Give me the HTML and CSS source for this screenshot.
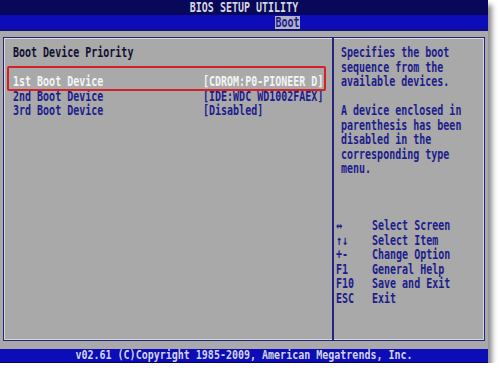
FILE: index.html
```html
<!DOCTYPE html>
<html lang="en">
<head>
    <meta charset="UTF-8">
    <meta name="viewport" content="width=device-width, initial-scale=1.0">
    <title>BIOS Setup Utility</title>
    <link rel="stylesheet" href="styles.css">
</head>
<body>
    <div class="screen">
        <header class="title-bar"><span class="txt">BIOS SETUP UTILITY</span></header>
        <nav class="tab-bar">
            <span class="tab"><span class="txt">Boot</span></span>
        </nav>

        <div class="body">
            <div class="panel">
                <section class="main">
                    <h1 class="line">Boot Device Priority</h1>
                    <ul class="devices">
                        <li class="line selected"><span class="label">1st Boot Device</span><span class="value">[CDROM:P0-PIONEER D]</span></li>
                        <li class="line"><span class="label">2nd Boot Device</span><span class="value">[IDE:WDC WD1002FAEX]</span></li>
                        <li class="line"><span class="label">3rd Boot Device</span><span class="value">[Disabled]</span></li>
                    </ul>
                    <div class="highlight"></div>
                </section>

                <aside class="help">
                    <p>
                        <span class="line">Specifies the boot</span>
                        <span class="line">sequence from the</span>
                        <span class="line">available devices.</span>
                    </p>
                    <p>
                        <span class="line">A device enclosed in</span>
                        <span class="line">parenthesis has been</span>
                        <span class="line">disabled in the</span>
                        <span class="line">corresponding type</span>
                        <span class="line">menu.</span>
                    </p>
                    <ul class="keys">
                        <li class="line"><span class="key">&harr;</span><span>Select Screen</span></li>
                        <li class="line"><span class="key">&uarr;&darr;</span><span>Select Item</span></li>
                        <li class="line"><span class="key">+-</span><span>Change Option</span></li>
                        <li class="line"><span class="key">F1</span><span>General Help</span></li>
                        <li class="line"><span class="key">F10</span><span>Save and Exit</span></li>
                        <li class="line"><span class="key">ESC</span><span>Exit</span></li>
                    </ul>
                </aside>
            </div>
        </div>

        <footer class="footer"><span class="txt">v02.61 (C)Copyright 1985-2009, American Megatrends, Inc.</span></footer>
    </div>
</body>
</html>
```

FILE: styles.css
```css
:root {
    --navy: #08085a;
    --blue: #0c0cb8;
    --gray: #a9a9a9;
    --ink: #1c1c8c;
    --line: #24247c;
    --light: #d8d8e2;
    --red: #d42027;
}

* {
    margin: 0;
    padding: 0;
    box-sizing: border-box;
}

body {
    background: #ffffff;
    font-family: "DejaVu Sans Mono", "Liberation Mono", monospace;
    font-size: 10px;
    font-weight: bold;
    color: var(--ink);
}

ul {
    list-style: none;
}

.screen {
    width: 488px;
    height: 363px;
    background: var(--gray);
    display: flex;
    flex-direction: column;
    box-shadow: 4px 5px 5px rgba(0,0,0,0.45);
}

/* tall, narrow BIOS glyphs */
.txt,
.line {
    display: block;
    transform: scaleY(1.35);
}

.title-bar {
    height: 15px;
    line-height: 15px;
    background: var(--navy);
    color: #d6d6de;
    text-align: center;
}

.tab-bar {
    height: 16px;
    background: var(--blue);
    border-bottom: 2px solid #12127a;
    padding: 1px 0 0 275px;
}

.tab {
    display: block;
    width: 25px;
    height: 13px;
    line-height: 13px;
    background: #b2b2c4;
    color: var(--ink);
    text-align: center;
}

.body {
    flex: 1;
    padding: 6px 3px 8px;
}

.panel {
    height: 100%;
    display: flex;
    border: 1px solid var(--line);
    box-shadow: inset 0 0 0 1px var(--light);
}

.line {
    height: 14.5px;
    line-height: 14.5px;
    white-space: pre;
}

.main {
    width: 330px;
    position: relative;
    padding: 8px 0 0 9px;
    border-right: 2px solid var(--line);
}

.main h1 {
    font-size: 10px;
    color: #101030;
    margin-bottom: 14.5px;
}

.devices li {
    display: flex;
}

.devices .label {
    width: 190px;
}

.devices .selected {
    color: #f4f4f4;
}

/* annotation box drawn over the first row */
.highlight {
    position: absolute;
    left: 3px;
    top: 28px;
    width: 319px;
    height: 25px;
    border: 2px solid var(--red);
    border-radius: 2px;
}

.help {
    flex: 1;
    padding: 8px 0 0 7px;
}

.help p + p {
    margin-top: 14.5px;
}

.keys {
    margin: 42.5px 0 0 -5px;
}

.keys li {
    display: flex;
}

.keys .key {
    width: 36px;
}

.footer {
    height: 14px;
    line-height: 14px;
    background: var(--blue);
    border-bottom: 1px solid #06064a;
    color: #d4d4e6;
    text-align: center;
}

.footer .txt {
    transform: scaleY(1.15);
}
```
